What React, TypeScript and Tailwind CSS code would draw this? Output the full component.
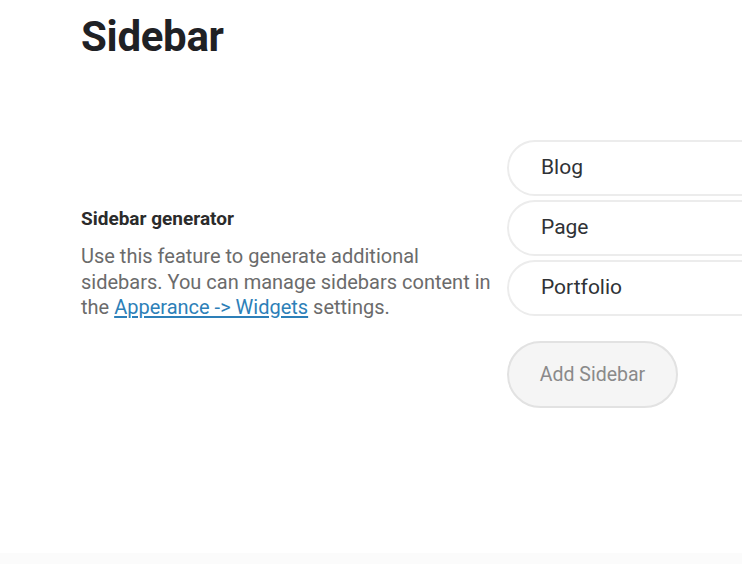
import React from 'react';

const sidebars = ['Blog', 'Page', 'Portfolio'];

export default function App() {
  return (
    <div className="relative w-[742px] h-[564px] overflow-hidden bg-white font-['Roboto',sans-serif]">
      <div className="pl-[81px] pt-[11px]">
        <h1 className="text-[42px] font-bold leading-[52px] text-[#1f2125] tracking-[-0.3px]">Sidebar</h1>
      </div>

      <div className="flex mt-[77px]">
        {/* Left description */}
        <div className="w-[507px] shrink-0 pl-[81px] pr-[10px] pt-[67px]">
          <h3 className="text-[19px] font-bold text-[#2b2b2b] leading-[24px]">Sidebar generator</h3>
          <p className="mt-[13px] text-[20px] leading-[25.5px] text-[#6b6b6b]">
            Use this feature to generate additional sidebars. You can manage sidebars content in the{' '}
            <a href="#" className="text-[#2d7fb8] underline underline-offset-2">Apperance -&gt; Widgets</a> settings.
          </p>
        </div>

        {/* Right list */}
        <div className="flex flex-col shrink-0">
          <div className="flex flex-col gap-[4px]">
            {sidebars.map((name) => (
              <div
                key={name}
                className="w-[280px] h-[56px] rounded-full border-2 border-[#ececec] bg-white flex items-center pl-[32px] text-[21px] text-[#2f3236]"
              >
                {name}
              </div>
            ))}
          </div>
          <button className="mt-[25px] w-[171px] h-[67px] rounded-full border-2 border-[#e2e2e2] bg-[#f5f5f5] text-[19.5px] text-[#8a8a8a]">
            Add Sidebar
          </button>
        </div>
      </div>

      <div className="absolute bottom-0 left-0 right-0 h-[11px] bg-[#fbfbfb]" />
    </div>
  );
}
